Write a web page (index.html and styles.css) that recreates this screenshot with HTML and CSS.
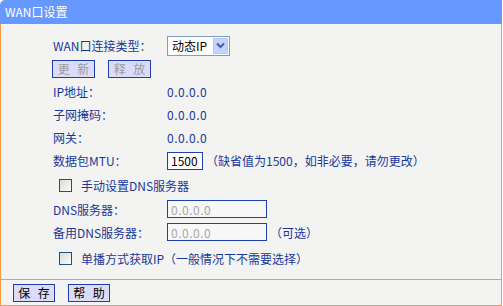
FILE: index.html
```html
<!DOCTYPE html>
<html lang="zh-CN">
<head>
    <meta charset="UTF-8">
    <title>WAN口设置</title>
    <link rel="stylesheet" href="styles.css">
</head>
<body>
    <div class="frame">
        <div class="header">WAN口设置</div>

        <div class="content">
            <div class="row">
                <div class="label">WAN口连接类型：</div>
                <div class="select">
                    <span class="select-text">动态IP</span>
                    <span class="select-arrow">
                        <svg width="11" height="11" viewBox="0 0 11 11">
                            <path d="M2 3.5 L5.5 7 L9 3.5" fill="none" stroke="#3c5fa8" stroke-width="2"/>
                        </svg>
                    </span>
                </div>
            </div>
            <div class="row">
                <div class="btn-group">
                    <button class="btn" disabled>更 新</button>
                    <button class="btn" disabled>释 放</button>
                </div>
            </div>
            <div class="row">
                <div class="label">IP地址：</div>
                <div class="value">0.0.0.0</div>
            </div>
            <div class="row">
                <div class="label">子网掩码：</div>
                <div class="value">0.0.0.0</div>
            </div>
            <div class="row">
                <div class="label">网关：</div>
                <div class="value">0.0.0.0</div>
            </div>
            <div class="row">
                <div class="label">数据包MTU：</div>
                <input class="input input-mtu" type="text" value="1500">
                <span class="hint">（缺省值为1500，如非必要，请勿更改）</span>
            </div>
            <div class="row row-check">
                <input class="check" type="checkbox">
                <span class="check-text">手动设置DNS服务器</span>
            </div>
            <div class="row row-dns">
                <div class="label">DNS服务器：</div>
                <input class="input input-ip" type="text" value="0.0.0.0" disabled>
            </div>
            <div class="row row-dns2">
                <div class="label">备用DNS服务器：</div>
                <input class="input input-ip" type="text" value="0.0.0.0" disabled>
                <span class="hint">（可选）</span>
            </div>
            <div class="row row-check2">
                <input class="check" type="checkbox">
                <span class="check-text">单播方式获取IP（一般情况下不需要选择）</span>
            </div>
        </div>

        <div class="footer">
            <button class="btn btn-dark">保 存</button>
            <button class="btn btn-dark">帮 助</button>
        </div>
    </div>
</body>
</html>
```

FILE: styles.css
```css
body {
    margin: 0;
    padding: 0;
    background-color: #fff;
    font-family: "Noto Sans CJK SC", sans-serif;
    font-size: 12px;
}

.frame {
    width: 502px;
    height: 306px;
    display: flex;
    flex-direction: column;
    box-sizing: border-box;
    border-bottom: 1px solid #f79a45;
}

.header {
    height: 24px;
    line-height: 24px;
    padding-left: 5px;
    background-color: #6699ff;
    color: #fff;
    border-top-left-radius: 5px;
}

.content {
    flex-grow: 1;
    display: flex;
    flex-direction: column;
    padding: 10px 0 0 52px;
    background-color: #f3f3f1;
    border-left: 1px solid #f79a45;
    border-right: 1px solid #f79a45;
    color: #17399c;
}

.row {
    height: 23px;
    display: flex;
    align-items: center;
}

.row-check {
    height: 26px;
}

.row-dns {
    height: 22px;
}

.row-dns2 {
    height: 24px;
}

.row-check2 {
    height: 28px;
}

.label {
    width: 114px;
    flex-shrink: 0;
}

.value {
    letter-spacing: 0.5px;
}

.select {
    width: 63px;
    height: 20px;
    box-sizing: border-box;
    border: 1px solid #7f9db9;
    background-color: #fff;
    display: flex;
    align-items: center;
    justify-content: space-between;
    padding: 0 1px 0 4px;
    color: #000;
}

.select-arrow {
    width: 15px;
    height: 16px;
    display: flex;
    align-items: center;
    justify-content: center;
    background-color: #c3d3fd;
    border: 1px solid #b5c8f5;
    box-sizing: border-box;
}

.btn-group {
    display: flex;
    gap: 13px;
    margin-left: -1px;
}

.btn {
    width: 43px;
    height: 18px;
    padding: 0;
    box-sizing: border-box;
    border: 1px solid #1f3fae;
    background-color: #dcdcfa;
    font-family: "Noto Sans CJK SC", sans-serif;
    font-size: 12px;
    line-height: 16px;
    word-spacing: 5px;
    color: #9a9a9a;
}

.btn-dark {
    width: 42px;
    color: #000;
}

.input {
    height: 18px;
    box-sizing: border-box;
    border: 1px solid #1f3fae;
    padding: 0 3px;
    font-family: "Noto Sans CJK SC", sans-serif;
    font-size: 12px;
    margin: 0;
    outline: none;
}

.input-mtu {
    width: 36px;
    background-color: #fff;
    color: #000;
}

.input-ip {
    width: 100px;
    background-color: #f7f7f7;
    color: #a8a8a8;
    letter-spacing: 0.5px;
}

.hint {
    margin-left: 3px;
}

.check {
    appearance: none;
    -webkit-appearance: none;
    width: 13px;
    height: 13px;
    margin: 0 9px 0 6px;
    box-sizing: border-box;
    border: 1px solid #1c5180;
    background: linear-gradient(135deg, #dcdcd7, #fbfbf9);
}

.footer {
    height: 25px;
    display: flex;
    align-items: center;
    gap: 13px;
    padding-left: 12px;
    background-color: #f3f3f1;
    border-top: 1px solid #f79a45;
    border-left: 1px solid #f79a45;
    border-right: 1px solid #f79a45;
}
```
